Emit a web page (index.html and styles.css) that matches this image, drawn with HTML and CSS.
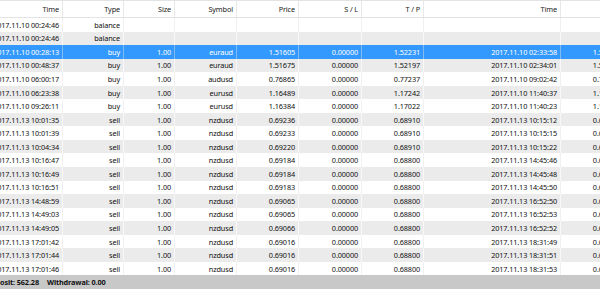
FILE: index.html
```html
<!DOCTYPE html>
<html lang="en">
<head>
  <meta charset="UTF-8" />
  <title>Account History</title>
  <link rel="stylesheet" href="styles.css">
</head>
<body>
  <div class="history">
    <div class="head">
      <span>Time</span><span>Type</span><span>Size</span><span>Symbol</span><span>Price</span>
      <span>S / L</span><span>T / P</span><span>Time</span><span>Price</span>
    </div>
    <div id="rows"></div>
    <div class="summary">Deposit: 562.28<span class="gap">Withdrawal: 0.00</span></div>
  </div>

  <script>
    const data = [
      ["2017.11.10 00:24:46", "balance"],
      ["2017.11.10 00:24:46", "balance"],
      ["2017.11.10 00:28:13", "buy", "1.00", "euraud", "1.51605", "0.00000", "1.52231", "2017.11.10 02:33:58", "1.52231"],
      ["2017.11.10 00:48:37", "buy", "1.00", "euraud", "1.51675", "0.00000", "1.52197", "2017.11.10 02:34:01", "1.52197"],
      ["2017.11.10 06:00:17", "buy", "1.00", "audusd", "0.76865", "0.00000", "0.77237", "2017.11.10 09:02:42", "0.77237"],
      ["2017.11.10 06:23:38", "buy", "1.00", "eurusd", "1.16489", "0.00000", "1.17242", "2017.11.10 11:40:37", "1.17242"],
      ["2017.11.10 09:26:11", "buy", "1.00", "eurusd", "1.16384", "0.00000", "1.17022", "2017.11.10 11:40:23", "1.17022"],
      ["2017.11.13 10:01:35", "sell", "1.00", "nzdusd", "0.69236", "0.00000", "0.68910", "2017.11.13 10:15:12", "0.68910"],
      ["2017.11.13 10:01:39", "sell", "1.00", "nzdusd", "0.69233", "0.00000", "0.68910", "2017.11.13 10:15:15", "0.68910"],
      ["2017.11.13 10:04:34", "sell", "1.00", "nzdusd", "0.69220", "0.00000", "0.68910", "2017.11.13 10:15:22", "0.68910"],
      ["2017.11.13 10:16:47", "sell", "1.00", "nzdusd", "0.69184", "0.00000", "0.68800", "2017.11.13 14:45:46", "0.68800"],
      ["2017.11.13 10:16:49", "sell", "1.00", "nzdusd", "0.69184", "0.00000", "0.68800", "2017.11.13 14:45:48", "0.68800"],
      ["2017.11.13 10:16:51", "sell", "1.00", "nzdusd", "0.69183", "0.00000", "0.68800", "2017.11.13 14:45:50", "0.68800"],
      ["2017.11.13 14:48:59", "sell", "1.00", "nzdusd", "0.69065", "0.00000", "0.68800", "2017.11.13 16:52:50", "0.68800"],
      ["2017.11.13 14:49:03", "sell", "1.00", "nzdusd", "0.69065", "0.00000", "0.68800", "2017.11.13 16:52:53", "0.68800"],
      ["2017.11.13 14:49:05", "sell", "1.00", "nzdusd", "0.69066", "0.00000", "0.68800", "2017.11.13 16:52:52", "0.68800"],
      ["2017.11.13 17:01:42", "sell", "1.00", "nzdusd", "0.69016", "0.00000", "0.68800", "2017.11.13 18:31:49", "0.68800"],
      ["2017.11.13 17:01:44", "sell", "1.00", "nzdusd", "0.69016", "0.00000", "0.68800", "2017.11.13 18:31:51", "0.68800"],
      ["2017.11.13 17:01:46", "sell", "1.00", "nzdusd", "0.69016", "0.00000", "0.68800", "2017.11.13 18:31:53", "0.68800"]
    ];
    const selected = 2;

    function renderRows() {
      const box = document.getElementById("rows");
      box.innerHTML = data.map((row, i) => {
        let cls = "row";
        if (i % 2 === 1) cls += " alt";
        if (i === selected) cls += " sel";
        let cells = "";
        for (let c = 0; c < 9; c++) cells += `<span>${row[c] || ""}</span>`;
        return `<div class="${cls}">${cells}</div>`;
      }).join("");
    }

    renderRows();
  </script>
</body>
</html>
```

FILE: styles.css
```css
body {
  margin: 0;
  background: #fff;
  font-family: "Noto Sans", "Liberation Sans", sans-serif;
  font-size: 7.3px;
  letter-spacing: -0.12px;
  color: #111;
  overflow: hidden;
}

.history {
  width: 632px;
  margin-left: -9px;
}

.head, .row {
  display: grid;
  grid-template-columns: 72px 61px 51px 62px 62px 63px 62px 137px 62px;
}

.head {
  height: 18px;
  box-sizing: border-box;
  border-top: 1px solid #e3e3e3;
  border-bottom: 1px solid #e3e3e3;
  color: #222;
}

.head span, .row span {
  display: flex;
  align-items: center;
  justify-content: flex-end;
  padding-right: 3px;
  border-right: 1px solid #e8e8e8;
  white-space: nowrap;
  overflow: hidden;
}

.row {
  height: 13.56px;
}
.row span {
  border-right-color: #f0f0f0;
}
.row.alt {
  background: #ebebeb;
}
.row.alt span {
  border-right-color: #f8f8f8;
}
.row.sel {
  background: #3399ff;
  color: #fff;
}
.row.sel span {
  border-right-color: #80bbf5;
}

.summary {
  height: 14px;
  background: #c8c8c8;
  font-weight: bold;
  color: #111;
  display: flex;
  align-items: center;
  text-indent: -5px;
  white-space: nowrap;
}
.summary .gap {
  margin-left: 8px;
  text-indent: 0;
}
```
